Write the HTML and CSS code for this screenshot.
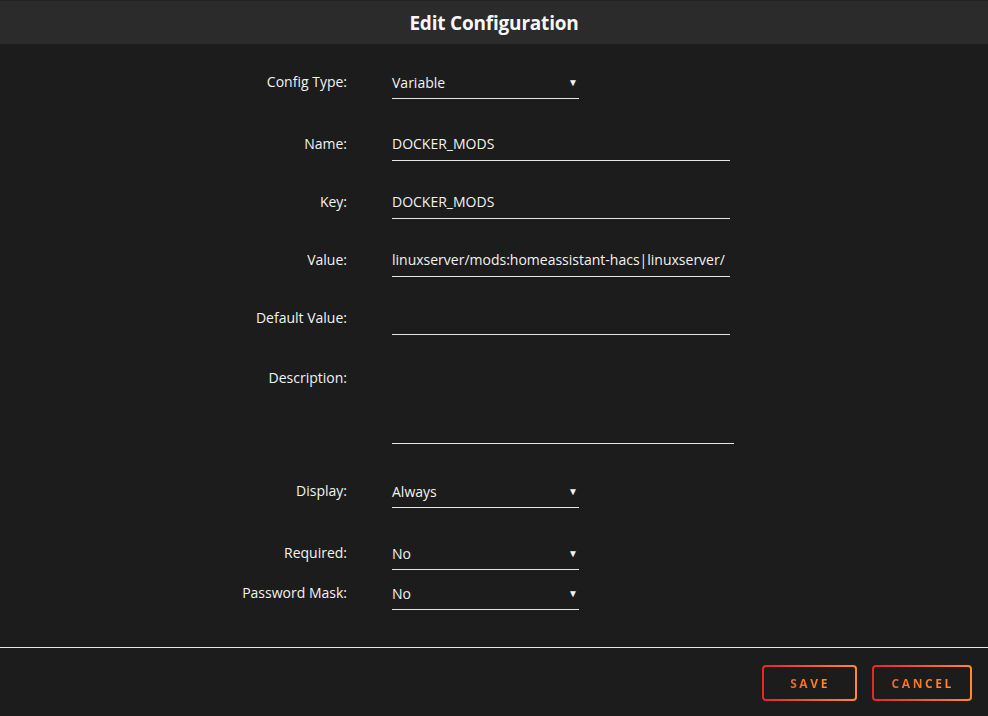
FILE: index.html
```html
<!DOCTYPE html>
<html>
<head>
    <title>Edit Configuration</title>
    <link rel="stylesheet" href="styles.css">
</head>
<body>
<div class="dialog">
    <div class="dialog-title">Edit Configuration</div>
    <div class="dialog-body">
        <div class="form-row">
            <label>Config Type:</label>
            <div class="fake-select"><span>Variable</span><span class="caret">&#9660;</span></div>
        </div>
        <div class="form-row">
            <label>Name:</label>
            <input class="text-input" type="text" value="DOCKER_MODS">
        </div>
        <div class="form-row">
            <label>Key:</label>
            <input class="text-input" type="text" value="DOCKER_MODS">
        </div>
        <div class="form-row">
            <label>Value:</label>
            <input class="text-input" type="text" value="linuxserver/mods:homeassistant-hacs|linuxserver/">
        </div>
        <div class="form-row">
            <label>Default Value:</label>
            <input class="text-input" type="text" value="">
        </div>
        <div class="form-row row-desc">
            <label>Description:</label>
            <textarea class="text-area"></textarea>
        </div>
        <div class="form-row">
            <label>Display:</label>
            <div class="fake-select"><span>Always</span><span class="caret">&#9660;</span></div>
        </div>
        <div class="form-row row-tight">
            <label>Required:</label>
            <div class="fake-select"><span>No</span><span class="caret">&#9660;</span></div>
        </div>
        <div class="form-row row-last">
            <label>Password Mask:</label>
            <div class="fake-select"><span>No</span><span class="caret">&#9660;</span></div>
        </div>
    </div>
    <div class="dialog-buttons">
        <button class="btn"><span>Save</span></button>
        <button class="btn"><span>Cancel</span></button>
    </div>
</div>
</body>
</html>
```

FILE: styles.css
```css
* {
    box-sizing: border-box;
}
html, body {
    margin: 0;
    background-color: #1c1c1c;
}
body {
    font-family: "Open Sans", "Noto Sans", sans-serif;
    font-size: 14px;
    color: #f2f2f2;
    height: 716px;
}
.dialog-title {
    height: 44px;
    line-height: 44px;
    background-color: #2b2b2b;
    border-top: 1px solid #232323;
    text-align: center;
    font-size: 19px;
    font-weight: 700;
    letter-spacing: -0.2px;
    color: #f7f7f7;
}
.dialog-body {
    padding-top: 23px;
}
.form-row {
    display: grid;
    grid-template-columns: 347px 338px;
    column-gap: 45px;
    margin-bottom: 30px;
}
.form-row label {
    text-align: right;
    line-height: 29px;
}
.fake-select {
    width: 187px;
    height: 32px;
    display: flex;
    justify-content: space-between;
    align-items: center;
    border-bottom: 1px solid #e6e6e6;
    padding-right: 1px;
    padding-bottom: 1px;
}
.caret {
    font-size: 10px;
}
.text-input {
    width: 338px;
    height: 32px;
    background: none;
    border: none;
    border-bottom: 1px solid #e6e6e6;
    color: #f2f2f2;
    font-family: inherit;
    font-size: 14px;
    padding: 0 0 2px 0;
    outline: none;
}
.form-row:nth-child(2),
.form-row:nth-child(3),
.form-row:nth-child(4) {
    margin-bottom: 26px;
}
.form-row:nth-child(5) {
    margin-bottom: 28px;
}
.row-desc {
    grid-template-columns: 347px 342px;
    margin-bottom: 32px;
}
.text-area {
    width: 342px;
    height: 81px;
    background: none;
    border: none;
    border-bottom: 1px solid #e6e6e6;
    resize: none;
    outline: none;
}
.row-tight {
    margin-bottom: 8px;
}
.row-last {
    margin-bottom: 0;
}
.dialog-buttons {
    margin-top: 37px;
    border-top: 1px solid #e6e6e6;
    display: flex;
    justify-content: flex-end;
    gap: 15px;
    padding: 17px 16px 0 0;
}
.btn {
    height: 36px;
    min-width: 95px;
    padding: 0 16px 0 18px;
    border: 2px solid transparent;
    border-radius: 4px;
    background: linear-gradient(#1c1c1c, #1c1c1c) padding-box,
                linear-gradient(90deg, #e22828, #ff8b2e) border-box;
    font-family: inherit;
    font-size: 12px;
    font-weight: 700;
    letter-spacing: 2.6px;
    text-transform: uppercase;
}
.btn span {
    background: linear-gradient(90deg, #f0662c, #ff8f2e);
    -webkit-background-clip: text;
    background-clip: text;
    color: transparent;
}
```
